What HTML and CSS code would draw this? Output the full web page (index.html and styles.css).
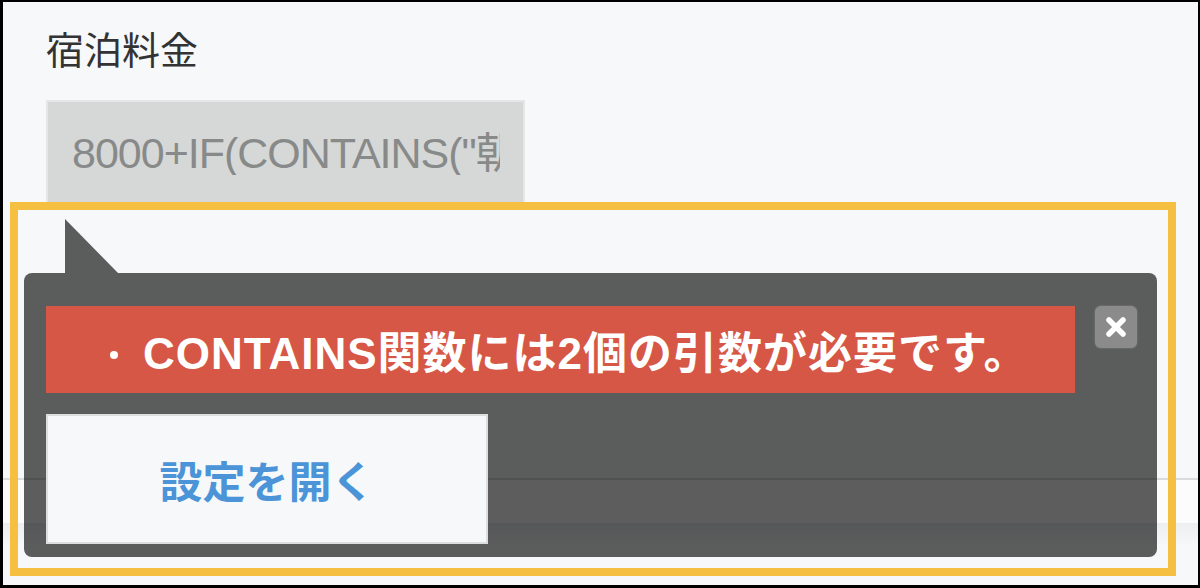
FILE: index.html
```html
<!DOCTYPE html>
<html lang="ja">
<head>
    <meta charset="UTF-8">
    <meta name="viewport" content="width=device-width, initial-scale=1.0">
    <title>宿泊料金</title>
    <link rel="stylesheet" href="styles.css">
</head>
<body>
    <div class="screen">
        <div class="field">
            <div class="field-label">宿泊料金</div>
            <div class="field-input">
                <div class="field-value">8000+IF(CONTAINS("朝食",朝食),1000,0)</div>
            </div>
        </div>

        <div class="page-foot"></div>

        <!-- error popup under the field -->
        <div class="error-popup">
            <div class="error-arrow"></div>
            <div class="error-box">
                <div class="error-main">
                    <ul class="error-list">
                        <li>CONTAINS関数には2個の引数が必要です。</li>
                    </ul>
                    <button class="open-settings" type="button">設定を開く</button>
                </div>
                <button class="error-close" type="button" aria-label="閉じる">
                    <svg width="22" height="22" viewBox="0 0 22 22">
                        <path d="M4 4L18 18M18 4L4 18" stroke="#fff" stroke-width="5.5" stroke-linecap="round" fill="none"/>
                    </svg>
                </button>
            </div>
        </div>

        <!-- highlight frame -->
        <div class="highlight"></div>
    </div>
</body>
</html>
```

FILE: styles.css
```css
body { margin: 0; background: #000; }

.screen {
    position: relative;
    box-sizing: border-box;
    width: 1200px;
    height: 588px;
    border-style: solid;
    border-color: #000;
    border-width: 2px 2px 3px 3px;
    background: #f7f8fa;
    padding: 27px 0 0 43px;
    overflow: hidden;
}

/* field */
.field-label {
    font-family: "Noto Sans CJK JP", "Liberation Sans", sans-serif;
    font-size: 38px;
    line-height: 1;
    color: #333;
}
.field-input {
    box-sizing: border-box;
    width: 479px;
    height: 106px;
    margin-top: 33px;
    padding: 0 23px 0 24px;
    border: 2px solid #e4e6e7;
    background: #d6d8d7;
    display: flex;
    align-items: center;
}
.field-value {
    overflow: hidden;
    white-space: nowrap;
    font-family: "Liberation Sans", "Noto Sans CJK JP", sans-serif;
    font-size: 43px;
    letter-spacing: -1px;
    line-height: 1;
    color: #888a8a;
}

/* page under the popup */
.page-foot {
    margin: 272px 0 0 -43px;
    height: 70px;
    border-top: 2px solid #d9dbdc;
    background: linear-gradient(#fcfcfd 0, #fcfcfd 43px, #eceef0 43px, #f7f8fa 66px);
}

/* error popup */
.error-popup {
    position: absolute;
    left: 21px;
    top: 217px;
}
.error-arrow {
    width: 0;
    height: 0;
    margin-left: 41px;
    border-top: 54px solid transparent;
    border-left: 53px solid rgba(0, 0, 0, 0.63);
}
.error-box {
    box-sizing: border-box;
    width: 1133px;
    height: 284px;
    padding: 33px 20px 13px 22px;
    border-radius: 8px;
    background: rgba(0, 0, 0, 0.63);
    display: flex;
    align-items: flex-start;
    gap: 20px;
}
.error-main { flex: 1; }
.error-list {
    list-style: none;
    margin: 0;
    padding: 0 0 0 64px;
    height: 87px;
    background: #d65745;
    display: flex;
    align-items: center;
}
.error-list li {
    font-family: "Liberation Sans", "Noto Sans CJK JP", sans-serif;
    font-size: 44px;
    font-weight: bold;
    letter-spacing: 1px;
    color: #fff;
    white-space: nowrap;
}
.error-list li::before {
    content: "";
    display: inline-block;
    width: 8px;
    height: 8px;
    margin-right: 25px;
    border-radius: 50%;
    background: #fff;
    vertical-align: 10px;
}
.open-settings {
    box-sizing: border-box;
    display: flex;
    align-items: center;
    justify-content: center;
    width: 442px;
    height: 130px;
    margin-top: 21px;
    border: 2px solid #dcdfe0;
    background: #f7f8fa;
    font-family: "Noto Sans CJK JP", sans-serif;
    font-size: 43px;
    font-weight: bold;
    color: #4b94d8;
    padding: 0;
}
.error-close {
    width: 42px;
    height: 42px;
    padding: 0;
    border: none;
    border-radius: 6px;
    background: #8a8b8a;
    box-shadow: 0 0 2px #8a8b8a;
    display: flex;
    align-items: center;
    justify-content: center;
}

/* highlight frame */
.highlight {
    position: absolute;
    left: 7px;
    top: 200px;
    box-sizing: border-box;
    width: 1166px;
    height: 374px;
    border: 8px solid #f5bf42;
}
```
